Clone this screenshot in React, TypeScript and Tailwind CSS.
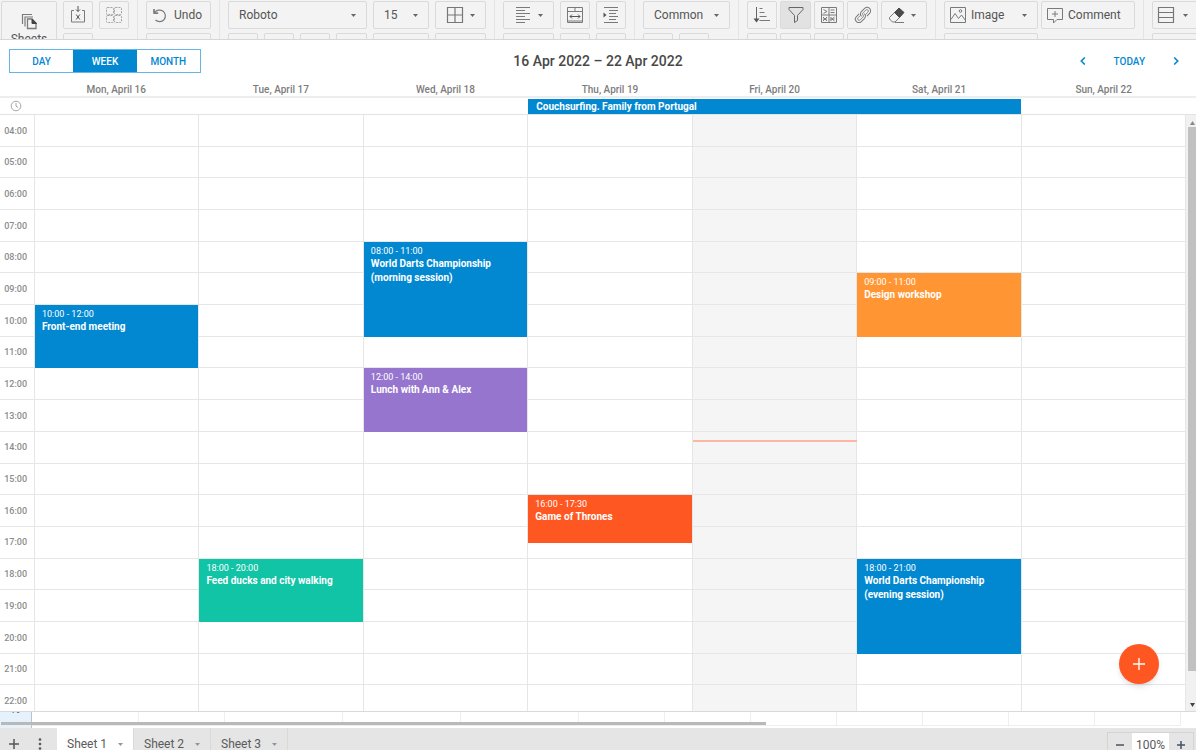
import React from "react";

type IconProps = { children: React.ReactNode; box?: string; className?: string };

function Icon({ children, box = "0 0 18 18", className = "size-[18px]" }: IconProps) {
  return (
    <svg viewBox={box} className={`shrink-0 ${className}`} fill="none" stroke="#7a7a7a" strokeWidth="1" aria-hidden="true">
      {children}
    </svg>
  );
}

function Caret({ className = "text-[#666]" }: { className?: string }) {
  return (
    <svg viewBox="0 0 5 3" className={`h-[3px] w-[5px] shrink-0 ${className}`} fill="currentColor" aria-hidden="true">
      <path d="M0 0h5L2.5 3z" />
    </svg>
  );
}

const icons = {
  sheets: (
    <Icon>
      <path d="M2.500 12V2.500H12M5 14.500V5h8" strokeWidth="1.200" />
      <path d="M7.500 7h4.500l4 4v5.500H7.500z" strokeWidth="1.300" />
      <path d="M12 7l4.500 4.500H12z" fill="#444" stroke="#444" />
    </Icon>
  ),
  importXls: (
    <Icon>
      <path d="M5 4.500H2.500v11.500h13V4.500H13" />
      <path d="M9 0v5.500M7 3.500l2 2 2-2M7.200 8.500l3.600 5M10.800 8.500l-3.600 5" stroke="#555" />
    </Icon>
  ),
  dashedGrid: (
    <Icon>
      <g stroke="#a3a3a3" strokeDasharray="2 1">
        <rect x="1.500" y="1.500" width="7" height="7" rx="1" />
        <rect x="9.500" y="1.500" width="7" height="7" rx="1" />
        <rect x="1.500" y="9.500" width="7" height="7" rx="1" />
        <rect x="9.500" y="9.500" width="7" height="7" rx="1" />
      </g>
    </Icon>
  ),
  undo: (
    <Icon box="0 0 16 16" className="size-4">
      <path d="M2 2v4.200h4.200" stroke="#555" strokeWidth="1.300" />
      <path d="M2.500 6A5.800 5.800 0 1 1 3.500 13" strokeWidth="1.200" />
    </Icon>
  ),
  borders: (
    <Icon>
      <path d="M1.500 1.500h15v15h-15zM9 1.500v15M1.500 9h15" stroke="#777" strokeWidth="1.200" />
    </Icon>
  ),
  align: (
    <Icon>
      <path d="M2 1.500h14M2 4.500h9M2 7.500h14M2 10.500h9M2 13.500h14M2 16.500h9" />
    </Icon>
  ),
  merge: (
    <Icon>
      <path d="M1.500 1.500h15v15h-15zM1.500 5.500h15M9 1.500v4M1.500 15h15" />
      <path d="M4 10.500h10M6 8.500l-2 2 2 2M12 8.500l2 2-2 2" stroke="#555" />
    </Icon>
  ),
  indent: (
    <Icon>
      <path d="M2 1.500h14M7 4.500h9M7 7.500h7M7 10.500h9M7 13.500h7M2 16.500h14" />
      <path d="M1.500 6.500L4.500 9l-3 2.500z" fill="#555" stroke="none" />
    </Icon>
  ),
  sort: (
    <Icon>
      <path d="M3.500 1v13" stroke="#666" />
      <path d="M.5 12.500h6l-3 4z" fill="#555" stroke="none" />
      <path d="M6.500 2.500h3M6.500 6.500h5M6.500 10.500h7M6.500 14.500h10.500" />
    </Icon>
  ),
  filter: (
    <Icon>
      <path d="M2 1.500h14v2l-5.500 6v5l-3 2v-7L2 3.500z" stroke="#666" />
    </Icon>
  ),
  conditional: (
    <Icon>
      <path d="M1.500 1.500h15v15h-15zM9 1.500v15M1.500 9h15M10.500 4h4M10.500 6.500h4M3.500 3.500l3.500 2-3.500 2M3 11l4 4M7 11l-4 4M3 13h4M11 11v4M14.500 11L12 13l2.500 2M10.500 13h4" />
    </Icon>
  ),
  link: (
    <Icon>
      <g transform="rotate(-45 9 9)">
        <path d="M7 5.500H3.200a3.500 3.500 0 0 0 0 7h4.300A3.500 3.500 0 0 0 11 9M11 12.500h3.800a3.500 3.500 0 0 0 0-7h-4.300A3.500 3.500 0 0 0 7 9" />
        <path d="M7 7.500H3.500a1.500 1.500 0 0 0 0 3h4A1.500 1.500 0 0 0 9 9M11 10.500h3.500a1.500 1.500 0 0 0 0-3h-4A1.500 1.500 0 0 0 9 9" strokeWidth=".8" />
      </g>
    </Icon>
  ),
  eraser: (
    <Icon>
      <path d="M1.500 11.500L6.500 6.500l5 5-4.500 4.500H4.500L1.500 13zM7 16.500h9" />
      <path d="M6.500 6.500L11 2l5 4.500-4.500 5z" fill="#4a4a4a" stroke="#4a4a4a" />
    </Icon>
  ),
  image: (
    <Icon>
      <path d="M1.500 1.500h15v15h-15zM2 13.500l4-6 3.500 5 3-3.500 4 5.500" />
      <circle cx="11.500" cy="5" r="1.300" />
    </Icon>
  ),
  comment: (
    <Icon>
      <path d="M1.500 2.500h15v11H11l-3.500 3.500v-3.500h-6zM9 5v6M6 8h6" />
    </Icon>
  ),
  rows: (
    <Icon>
      <path d="M1.500 1.500h15v15h-15zM1.500 6.500h15M1.500 11.500h15" stroke="#777" strokeWidth="1.200" />
    </Icon>
  ),
};

function ToolButton({
  label,
  className,
  children,
}: {
  label: string;
  className: string;
  children?: React.ReactNode;
}) {
  return (
    <button
      type="button"
      aria-label={label}
      className={`flex h-7 shrink-0 items-center rounded-xs border border-[#dadada] ${className}`}
    >
      {children}
    </button>
  );
}

function Group({ top, bottom, gap = "gap-1.5" }: { top: React.ReactNode; bottom?: React.ReactNode; gap?: string }) {
  return (
    <div className="flex shrink-0 flex-col gap-1 border-r border-[#e4e4e4] px-2 pt-px">
      <div className={`flex ${gap}`}>{top}</div>
      <div className={`flex ${gap}`}>{bottom}</div>
    </div>
  );
}

function Toolbar() {
  return (
    <div
      role="toolbar"
      aria-label="Spreadsheet tools"
      className="flex h-10 shrink-0 overflow-hidden border-b border-[#d6d6d6] bg-[#f3f3f3] text-xs text-[#555]"
    >
      <div className="flex shrink-0 gap-1.5 border-r border-[#e4e4e4] pt-px pr-2 pl-px">
        <button
          type="button"
          className="flex h-16 w-14 flex-col items-center gap-px rounded-xs border border-[#dadada] pt-2.5 text-xs leading-4"
        >
          {icons.sheets}
          Sheets
        </button>
        <div className="flex flex-col gap-1">
          <div className="flex gap-1.5">
            <ToolButton label="Import" className="w-[30px] justify-center">{icons.importXls}</ToolButton>
            <ToolButton label="Borders preview" className="w-[30px] justify-center">{icons.dashedGrid}</ToolButton>
          </div>
          <ToolButton label="Export" className="w-[30px]" />
        </div>
      </div>
      <Group
        top={<ToolButton label="Undo" className="w-[65px] gap-1.5 pl-[5px]">{icons.undo}<span>Undo</span></ToolButton>}
        bottom={<ToolButton label="Redo" className="w-[65px]" />}
      />
      <Group
        top={
          <>
            <ToolButton label="Font family" className="w-[139px] justify-between px-2.5">Roboto<Caret /></ToolButton>
            <ToolButton label="Font size" className="w-14 justify-between px-2.5">15<Caret /></ToolButton>
            <ToolButton label="Borders" className="w-[51px] justify-between px-2.5">{icons.borders}<Caret /></ToolButton>
          </>
        }
        bottom={
          <>
            <ToolButton label="Bold" className="w-[30px]" />
            <ToolButton label="Italic" className="w-[30px]" />
            <ToolButton label="Underline" className="w-[30px]" />
            <ToolButton label="Strike" className="w-[31px]" />
            <ToolButton label="Text color" className="w-14" />
            <ToolButton label="Fill color" className="w-[51px]" />
          </>
        }
      />
      <Group
        top={
          <>
            <ToolButton label="Horizontal align" className="w-[51px] justify-between px-2.5">{icons.align}<Caret /></ToolButton>
            <ToolButton label="Merge cells" className="w-[30px] justify-center">{icons.merge}</ToolButton>
            <ToolButton label="Indent" className="w-[30px] justify-center">{icons.indent}</ToolButton>
          </>
        }
        bottom={
          <>
            <ToolButton label="Vertical align" className="w-[51px]" />
            <ToolButton label="Wrap text" className="w-[30px]" />
            <ToolButton label="Outdent" className="w-[30px]" />
          </>
        }
      />
      <Group
        top={<ToolButton label="Number format" className="w-[87px] justify-between px-2.5">Common<Caret /></ToolButton>}
        bottom={
          <>
            <ToolButton label="Decrease decimals" className="w-[30px]" />
            <ToolButton label="Increase decimals" className="w-[30px]" />
          </>
        }
      />
      <Group
        gap="gap-[3px]"
        top={
          <>
            <ToolButton label="Sort" className="w-[30px] justify-center">{icons.sort}</ToolButton>
            <ToolButton label="Filter" className="w-[31px] justify-center bg-[#e2e2e2]">{icons.filter}</ToolButton>
            <ToolButton label="Conditional format" className="w-[30px] justify-center">{icons.conditional}</ToolButton>
            <ToolButton label="Link" className="w-[31px] justify-center">{icons.link}</ToolButton>
            <ToolButton label="Clear" className="w-[46px] justify-between pr-2.5 pl-1.5">{icons.eraser}<Caret /></ToolButton>
          </>
        }
        bottom={
          <>
            <ToolButton label="Data validation" className="w-[30px]" />
            <ToolButton label="Names" className="w-[31px]" />
            <ToolButton label="Protect" className="w-[30px]" />
            <ToolButton label="Lock" className="w-[31px]" />
          </>
        }
      />
      <Group
        gap="gap-[3px]"
        top={
          <>
            <ToolButton label="Image" className="w-[94px] gap-1 pr-2.5 pl-1">
              {icons.image}
              <span className="grow text-left">Image</span>
              <Caret />
            </ToolButton>
            <ToolButton label="Comment" className="w-[94px] gap-1 pl-1">{icons.comment}<span>Comment</span></ToolButton>
          </>
        }
        bottom={<ToolButton label="Chart" className="w-[94px]" />}
      />
      <Group
        top={<ToolButton label="Rows" className="w-[51px] gap-2 pl-1">{icons.rows}<Caret /></ToolButton>}
        bottom={<ToolButton label="Columns" className="w-[51px]" />}
      />
    </div>
  );
}

const days = [
  "Mon, April 16",
  "Tue, April 17",
  "Wed, April 18",
  "Thu, April 19",
  "Fri, April 20",
  "Sat, April 21",
  "Sun, April 22",
];

const hours = Array.from({ length: 19 }, (_, i) => `${String(i + 4).padStart(2, "0")}:00`);

/* Grid rows are half hours, counted from 04:00. */
const events = [
  { time: "10:00 - 12:00", title: "Front-end meeting", place: "col-start-2 row-start-13 row-end-17", color: "bg-[#0288d1]" },
  { time: "18:00 - 20:00", title: "Feed ducks and city walking", place: "col-start-3 row-start-29 row-end-33", color: "bg-[#12c4a6]" },
  { time: "08:00 - 11:00", title: "World Darts Championship (morning session)", place: "col-start-4 row-start-9 row-end-15", color: "bg-[#0288d1]" },
  { time: "12:00 - 14:00", title: "Lunch with Ann & Alex", place: "col-start-4 row-start-17 row-end-21", color: "bg-[#9575cd]" },
  { time: "16:00 - 17:30", title: "Game of Thrones", place: "col-start-5 row-start-25 row-end-28", color: "bg-[#ff5722]" },
  { time: "09:00 - 11:00", title: "Design workshop", place: "col-start-7 row-start-11 row-end-15", color: "bg-[#ff9633]" },
  { time: "18:00 - 21:00", title: "World Darts Championship (evening session)", place: "col-start-7 row-start-29 row-end-35", color: "bg-[#0288d1]" },
];

function CalendarHeader() {
  return (
    <header className="grid h-[42px] shrink-0 grid-cols-[1fr_auto_1fr] items-center px-[9px] text-[10px] font-medium text-[#0288d1]">
      <div className="flex h-6 w-48 border border-[#62b5e4]">
        <button type="button" className="flex-1">DAY</button>
        <button type="button" className="flex-1 bg-[#0288d1] text-white">WEEK</button>
        <button type="button" className="flex-1">MONTH</button>
      </div>
      <h1 className="text-sm font-medium text-[#484848]">16 Apr 2022 – 22 Apr 2022</h1>
      <div className="flex items-center justify-end gap-6 pr-1">
        <button type="button" aria-label="Previous week" className="p-1">
          <svg viewBox="0 0 6 8" className="h-2 w-1.5" fill="none" stroke="currentColor" strokeWidth="1.600"><path d="M4.800.500L1.300 4l3.500 3.500" /></svg>
        </button>
        <button type="button">TODAY</button>
        <button type="button" aria-label="Next week" className="p-1">
          <svg viewBox="0 0 6 8" className="h-2 w-1.5" fill="none" stroke="currentColor" strokeWidth="1.600"><path d="M1.200.500L4.700 4 1.200 7.500" /></svg>
        </button>
      </div>
    </header>
  );
}

function Calendar() {
  return (
    <main className="flex min-h-0 flex-1 flex-col border-b border-[#d9d9d9] bg-white">
      <CalendarHeader />
      <div className="grid h-4 shrink-0 grid-cols-[34px_repeat(7,minmax(0,1fr))_10px] items-end border-b-2 border-[#ededed] text-center text-[10px] leading-3 font-medium text-[#7d7d7d]">
        {days.map((day, i) => (
          <div key={day} className={i === 0 ? "col-start-2" : ""}>{day}</div>
        ))}
      </div>
      <div className="grid h-[17px] shrink-0 grid-cols-[35px_repeat(7,minmax(0,1fr))_10px] border-b border-[#e3e3e3]">
        <div className="flex items-center pl-2.5">
          <svg viewBox="0 0 12 12" className="size-3" fill="none" stroke="#a8a8a8" aria-hidden="true">
            <circle cx="6" cy="6" r="4.800" />
            <path d="M6 3v3.200l2.200 1.300" />
          </svg>
        </div>
        <div className="col-start-5 col-end-8 mt-px mr-px flex items-center bg-[#0288d1] pl-2 text-[10px] leading-3 font-bold text-white">
          Couchsurfing. Family from Portugal
        </div>
      </div>
      <div className="flex min-h-0 flex-1">
        <div className="grid min-w-0 flex-1 grid-cols-1 grid-rows-[602px] overflow-hidden">
          <div className="col-start-1 row-start-1 grid grid-cols-[35px_repeat(7,minmax(0,1fr))] grid-rows-[repeat(19,minmax(0,1fr))]">
            {hours.map((hour) => (
              <React.Fragment key={hour}>
                <div className="flex items-center justify-end border-r border-b border-[#e6e6e6] pt-0.5 pr-[7px] text-[9px] font-medium text-[#8c8c8c]">
                  {hour}
                </div>
                {days.map((day, i) => (
                  <div key={day} className={`border-r border-b border-[#e6e6e6] ${i === 4 ? "bg-[#f5f5f5]" : ""}`} />
                ))}
              </React.Fragment>
            ))}
          </div>
          <div className="col-start-1 row-start-1 grid grid-cols-[35px_repeat(7,minmax(0,1fr))] grid-rows-[repeat(38,minmax(0,1fr))]">
            <div className="col-start-6 row-start-21 row-end-23 mt-2 h-0.5 bg-[#fbb8a3]" />
            {events.map((event) => (
              <article
                key={event.title}
                className={`mr-px pt-[3px] pr-6 pl-[7px] text-white ${event.place} ${event.color}`}
              >
                <time className="block text-[9px] leading-3">{event.time}</time>
                <h2 className="text-[10px] leading-[14px] font-bold">{event.title}</h2>
              </article>
            ))}
          </div>
        </div>
        <div className="flex w-2.5 shrink-0 flex-col items-center bg-[#f1f1f1] py-1 pl-0.5">
          <svg viewBox="0 0 5 4" className="my-0.5 h-1 w-[5px] shrink-0" fill="#888" aria-hidden="true"><path d="M0 4l2.500-4L5 4z" /></svg>
          <div className="mb-8 w-full grow bg-[#c1c1c1]" />
          <svg viewBox="0 0 5 4" className="h-1 w-[5px] shrink-0" fill="#444" aria-hidden="true"><path d="M0 0h5L2.500 4z" /></svg>
        </div>
      </div>
    </main>
  );
}

const sheetColumns = ["w-[107px]", "w-[86px]", "w-[118px]", "w-[118px]", "w-[118px]", "w-[86px]", "w-[86px]", "w-[86px]", "w-[86px]", "w-[86px]", "w-[86px]", "w-[86px]"];

function SheetStrip() {
  return (
    <div className="relative flex h-4 shrink-0 overflow-hidden bg-white">
      <div className="flex w-8 shrink-0 items-start justify-center border-r border-[#b9c4cc] bg-[#e6f2fb]">
        <span className="-mt-2 text-[10px] leading-3 text-[#555]">19</span>
      </div>
      {sheetColumns.map((width, i) => (
        <div key={i} className={`h-3.5 shrink-0 border-r border-b border-[#eee] ${width}`} />
      ))}
      <div className="absolute bottom-[3px] left-px h-[3px] w-[64%] bg-[#b9b9b9]" />
    </div>
  );
}

function SheetTabs() {
  return (
    <footer className="h-[22px] shrink-0 overflow-hidden bg-[#e5e5e5] text-xs text-[#5a5a5a]">
      <div className="flex h-8 justify-between">
        <div className="flex">
          <button type="button" aria-label="Add sheet" className="flex w-7 items-center justify-center">
            <svg viewBox="0 0 12 12" className="size-3" stroke="#555" strokeWidth="1.500" aria-hidden="true"><path d="M6 1v10M1 6h10" /></svg>
          </button>
          <button type="button" aria-label="All sheets" className="flex w-[29px] items-center justify-center pr-1.5">
            <svg viewBox="0 0 4 12" className="h-3 w-1" fill="#555" aria-hidden="true">
              <circle cx="2" cy="1.500" r="1.300" /><circle cx="2" cy="6" r="1.300" /><circle cx="2" cy="10.500" r="1.300" />
            </svg>
          </button>
          {["Sheet 1", "Sheet 2", "Sheet 3"].map((name, i) => (
            <button
              key={name}
              type="button"
              className={`flex w-[77px] items-center justify-between border-r border-[#d9d9d9] px-2.5 ${i === 0 ? "bg-white" : ""}`}
            >
              {name}
              <Caret className="text-[#8b98a8]" />
            </button>
          ))}
        </div>
        <div className="mt-1 mr-0.5 flex border border-b-0 border-[#d4d4d4]">
          <button type="button" aria-label="Zoom out" className="flex w-6 items-center justify-center pb-1">
            <svg viewBox="0 0 8 8" className="size-2" stroke="#475066" strokeWidth="1.500" aria-hidden="true"><path d="M0 4h8" /></svg>
          </button>
          <div className="flex w-[37px] items-center justify-center bg-white pb-1">100%</div>
          <button type="button" aria-label="Zoom in" className="flex w-6 items-center justify-center pb-1">
            <svg viewBox="0 0 8 8" className="size-2" stroke="#475066" strokeWidth="1.500" aria-hidden="true"><path d="M0 4h8M4 0v8" /></svg>
          </button>
        </div>
      </div>
    </footer>
  );
}

export default function App() {
  return (
    <div className="relative flex h-screen flex-col overflow-hidden bg-white font-[Roboto,sans-serif]">
      <Toolbar />
      <Calendar />
      <SheetStrip />
      <SheetTabs />
      <button
        type="button"
        aria-label="Add event"
        className="absolute right-[37px] bottom-[66px] z-20 flex size-10 items-center justify-center rounded-full bg-[#ff5722] shadow-md"
      >
        <svg viewBox="0 0 12 12" className="size-3" stroke="white" strokeWidth="1.300" aria-hidden="true"><path d="M6 0v12M0 6h12" /></svg>
      </button>
    </div>
  );
}
